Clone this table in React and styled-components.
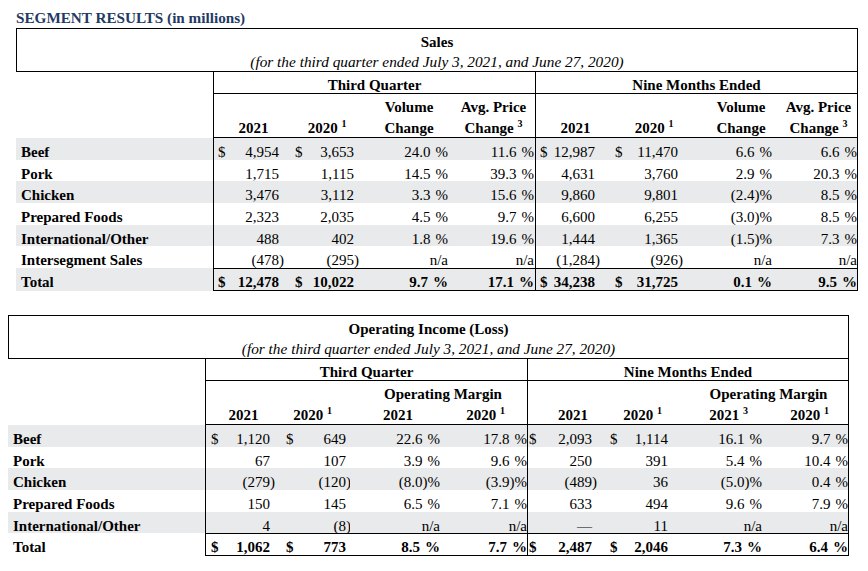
import React from "react";
import styled, { createGlobalStyle } from "styled-components";

const GlobalStyle = createGlobalStyle`
  html, body {
    margin: 0;
    padding: 0;
    background: #fff;
  }
  body {
    font-family: "Liberation Serif", "Times New Roman", serif;
    color: #000;
  }
  * {
    box-sizing: border-box;
  }
`;

const GRAY = "#e9eaeb";
const edge = (on) => (on ? "1px solid #000" : "none");

const Page = styled.div`
  width: 868px;
  height: 571px;
  padding: 9px 0 0 8px;
  overflow: hidden;
`;

const Title = styled.div`
  margin-left: 8px;
  font-size: 15.2px;
  font-weight: bold;
  line-height: 17px;
  color: #1f3b63;
`;

const Table = styled.div`
  display: grid;
  grid-template-columns: ${(p) => p.$cols};
  margin-left: ${(p) => p.$left}px;
  margin-top: ${(p) => p.$top}px;
  font-size: 15px;
`;

const Caption = styled.div`
  grid-column: 1 / -1;
  height: 44px;
  border: 1px solid #000;
  padding-top: 4px;
  text-align: center;
  line-height: 19px;
  white-space: nowrap;
`;

const CaptionTitle = styled.div`
  font-weight: bold;
`;

const CaptionSub = styled.div`
  font-style: italic;
  font-size: 15.3px;
`;

const Cell = styled.div`
  grid-column: span ${(p) => p.$span || 1};
  height: ${(p) => p.$h}px;
  padding-top: ${(p) => p.$pt}px;
  line-height: 15px;
  white-space: nowrap;
  background: ${(p) => (p.$shade ? GRAY : "transparent")};
  border-left: ${(p) => edge(p.$bl)};
  border-right: ${(p) => edge(p.$br)};
  border-top: ${(p) => edge(p.$bt)};
  border-bottom: ${(p) => edge(p.$bb)};
`;

const HeadCell = styled(Cell)`
  font-weight: bold;
  text-align: center;
  padding-left: ${(p) => p.$pl || 0}px;
`;

const LabelCell = styled(Cell)`
  font-weight: bold;
  padding-left: 5px;
`;

const NumCell = styled(Cell)`
  display: flex;
  justify-content: ${(p) => (p.$dollar ? "space-between" : "flex-end")};
  padding-left: ${(p) => p.$pl || 0}px;
  padding-right: ${(p) => p.$pr || 0}px;
  font-weight: ${(p) => (p.$bold ? "bold" : "normal")};
`;

const Sup = styled.span`
  font-size: 10px;
  vertical-align: super;
  line-height: 0;
`;

const Tail = styled.span`
  display: inline-block;
  width: 5px;
`;

const Hang = styled.span`
  display: inline-block;
  width: 0;
`;

const MONEY = [0, 1, 4, 5];

const sales = {
  left: 8,
  topGap: 2,
  title: "Sales",
  widths: [197, 70, 75, 94, 83, 65, 82, 95, 81],
  cols: [
    { bl: true, pl: 4, pr: 4, hl: 10 },
    { pl: 12, pr: 4, hl: 13 },
    { pr: 4, hl: 8 },
    { pr: 1, hl: 0 },
    { bl: true, pl: 4, pr: 5, hl: 15 },
    { pl: 15, pr: 4, hl: 26 },
    { pr: 5, hl: 23 },
    { br: true, pr: 0, hl: 3 },
  ],
  top: [
    { t: "" },
    { t: "" },
    { t: "Volume" },
    { t: "Avg. Price" },
    { t: "" },
    { t: "" },
    { t: "Volume" },
    { t: "Avg. Price" },
  ],
  bottom: ["2021", ["2020", "1"], "Change", ["Change", "3"], "2021", ["2020", "1"], "Change", ["Change", "3"]],
  rows: [
    { label: "Beef", dollar: true, vals: ["4,954", "3,653", "24.0%", "11.6%", "12,987", "11,470", "6.6%", "6.6%"] },
    { label: "Pork", vals: ["1,715", "1,115", "14.5%", "39.3%", "4,631", "3,760", "2.9%", "20.3%"] },
    { label: "Chicken", vals: ["3,476", "3,112", "3.3%", "15.6%", "9,860", "9,801", "(2.4)%", "8.5%"] },
    { label: "Prepared Foods", vals: ["2,323", "2,035", "4.5%", "9.7%", "6,600", "6,255", "(3.0)%", "8.5%"] },
    { label: "International/Other", vals: ["488", "402", "1.8%", "19.6%", "1,444", "1,365", "(1.5)%", "7.3%"] },
    { label: "Intersegment Sales", vals: ["(478)", "(295)", "n/a", "n/a", "(1,284)", "(926)", "n/a", "n/a"] },
    { label: "Total", dollar: true, total: true, vals: ["12,478", "10,022", "9.7%", "17.1%", "34,238", "31,725", "0.1%", "9.5%"] },
  ],
};

const income = {
  left: 0,
  topGap: 24,
  title: "Operating Income (Loss)",
  widths: [197, 70, 75, 94, 83, 70, 76, 94, 82],
  cols: [
    { bl: true, pl: 5, pr: 5, hl: 6 },
    { pl: 11, pr: 4, hl: 0 },
    { pr: 4, hl: 2 },
    { pr: 0, hl: 0 },
    { bl: true, pl: 1, pr: 5, hl: 21 },
    { pl: 13, pr: 5, hl: 15 },
    { pr: 5, hl: 17 },
    { br: true, pr: 0, hl: 4 },
  ],
  top: [
    { t: "" },
    { t: "" },
    { t: "Operating Margin", span: 2, hl: 9 },
    { t: "" },
    { t: "" },
    { t: "Operating Margin", span: 2, hl: 16 },
  ],
  bottom: ["2021", ["2020", "1"], "2021", ["2020", "1"], "2021", ["2020", "1"], ["2021", "3"], ["2020", "1"]],
  rows: [
    { label: "Beef", dollar: true, vals: ["1,120", "649", "22.6%", "17.8%", "2,093", "1,114", "16.1%", "9.7%"] },
    { label: "Pork", vals: ["67", "107", "3.9%", "9.6%", "250", "391", "5.4%", "10.4%"] },
    { label: "Chicken", vals: ["(279)", "(120)", "(8.0)%", "(3.9)%", "(489)", "36", "(5.0)%", "0.4%"] },
    { label: "Prepared Foods", vals: ["150", "145", "6.5%", "7.1%", "633", "494", "9.6%", "7.9%"] },
    { label: "International/Other", vals: ["4", "(8)", "n/a", "n/a", "—", "11", "n/a", "n/a"] },
    { label: "Total", dollar: true, total: true, vals: ["1,062", "773", "8.5%", "7.7%", "2,487", "2,046", "7.3%", "6.4%"] },
  ],
};

function HeadText({ t }) {
  if (Array.isArray(t)) {
    return (
      <>
        {t[0]} <Sup>{t[1]}</Sup>
      </>
    );
  }
  return t;
}

function Value({ v }) {
  if (v === "n/a" || v === "—") return v;
  if (v.endsWith("%")) {
    const core = v.slice(0, -1);
    const neg = core.endsWith(")");
    return (
      <>
        {neg ? core.slice(0, -1) : core}
        <Tail>{neg ? ")" : ""}</Tail>%
      </>
    );
  }
  if (v.endsWith(")")) {
    return (
      <>
        {v.slice(0, -1)}
        <Hang>)</Hang>
      </>
    );
  }
  return v;
}

function SegmentTable({ data }) {
  const { cols } = data;

  // top header line; a span takes the borders of its outer columns
  let at = 0;
  const topCells = data.top.map((h, i) => {
    const span = h.span || 1;
    const first = cols[at];
    const last = cols[at + span - 1];
    at += span;
    return (
      <HeadCell
        key={"t" + i}
        $span={span}
        $h={22}
        $pt={6}
        $pl={h.hl !== undefined ? h.hl : first.hl}
        $bl={first.bl}
        $br={last.br}
      >
        {h.t}
      </HeadCell>
    );
  });

  return (
    <Table $cols={data.widths.map((w) => w + "px").join(" ")} $left={data.left} $top={data.topGap}>
      <Caption>
        <CaptionTitle>{data.title}</CaptionTitle>
        <CaptionSub>(for the third quarter ended July 3, 2021, and June 27, 2020)</CaptionSub>
      </Caption>

      <Cell $h={22} />
      <HeadCell $span={4} $h={22} $pt={6} $bl $bb>
        Third Quarter
      </HeadCell>
      <HeadCell $span={4} $h={22} $pt={6} $bl $br $bb>
        Nine Months Ended
      </HeadCell>

      <Cell $h={22} />
      {topCells}

      <Cell $h={22} />
      {data.bottom.map((t, i) => (
        <HeadCell key={"b" + i} $h={22} $pt={5} $pl={cols[i].hl} $bl={cols[i].bl} $br={cols[i].br} $bb>
          <HeadText t={t} />
        </HeadCell>
      ))}

      {data.rows.map((row, r) => {
        const shade = r % 2 === 0;
        const h = row.total ? 22.7 : 21.7;
        return (
          <React.Fragment key={row.label}>
            <LabelCell $h={h} $pt={7} $shade={shade}>
              {row.label}
            </LabelCell>
            {row.vals.map((v, i) => {
              const c = cols[i];
              const dollar = row.dollar && MONEY.includes(i);
              return (
                <NumCell
                  key={i}
                  $h={h}
                  $pt={row.total ? 6 : 7}
                  $shade={shade}
                  $bold={row.total}
                  $dollar={dollar}
                  $pl={c.pl}
                  $pr={c.pr}
                  $bl={c.bl}
                  $br={c.br}
                  $bt={row.total}
                  $bb={row.total}
                >
                  {dollar && <span>$</span>}
                  <span>
                    <Value v={v} />
                  </span>
                </NumCell>
              );
            })}
          </React.Fragment>
        );
      })}
    </Table>
  );
}

export default function App() {
  return (
    <>
      <GlobalStyle />
      <Page>
        <Title>SEGMENT RESULTS (in millions)</Title>
        <SegmentTable data={sales} />
        <SegmentTable data={income} />
      </Page>
    </>
  );
}
